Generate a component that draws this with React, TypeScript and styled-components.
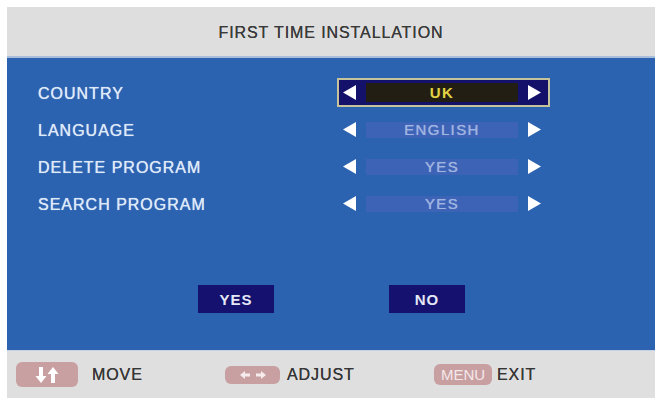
import React from "react";
import styled, { createGlobalStyle } from "styled-components";

const GlobalStyle = createGlobalStyle`
  html, body {
    margin: 0;
    padding: 0;
    background: #ffffff;
  }
  body {
    font-family: "Liberation Sans", Arial, sans-serif;
  }
`;

const Page = styled.div`
  width: 659px;
  height: 404px;
  padding: 7px 4px 6px 7px;
  box-sizing: border-box;
`;

const Panel = styled.div`
  width: 648px;
  height: 391px;
  display: flex;
  flex-direction: column;
`;

const Header = styled.div`
  height: 51px;
  background: #dedede;
  border-bottom: 2px solid #a9bedc;
  box-sizing: border-box;
  display: flex;
  align-items: center;
  justify-content: center;
  color: #3a3a3a;
  font-size: 16px;
  letter-spacing: 0.9px;
  padding-top: 2px;
  text-shadow: 0 0 0.6px #3a3a3a;
`;

const Body = styled.div`
  height: 292px;
  background: #2c63b1;
  box-sizing: border-box;
  padding: 16px 0 0 31px;
  display: flex;
  flex-direction: column;
`;

const Rows = styled.div`
  display: grid;
  grid-template-columns: 299px 213px;
  grid-auto-rows: 37px;
  align-items: center;
`;

const Label = styled.div`
  color: #dfeaf8;
  font-size: 16px;
  letter-spacing: 1px;
  padding-top: 2px;
  text-shadow: 0 0 0.7px #dfeaf8;
`;

const Control = styled.div<{ $active?: boolean }>`
  height: 29px;
  box-sizing: border-box;
  display: flex;
  align-items: center;
  padding: 0 7px 0 4px;
  gap: 10px;
  border: 2px solid ${(p) => (p.$active ? "#c4c39a" : "transparent")};
  background: ${(p) => (p.$active ? "#14116b" : "transparent")};
`;

const Value = styled.div<{ $active?: boolean }>`
  flex: 1;
  height: ${(p) => (p.$active ? "19px" : "16px")};
  display: flex;
  align-items: center;
  justify-content: center;
  font-size: 15px;
  letter-spacing: 1.4px;
  background: ${(p) => (p.$active ? "#231e14" : "#3d63b7")};
  color: ${(p) => (p.$active ? "#e3d443" : "#a0b4e0")};
  font-weight: ${(p) => (p.$active ? "bold" : "normal")};
  text-shadow: ${(p) => (p.$active ? "none" : "0 0 0.7px #a0b4e0")};
`;

const Buttons = styled.div`
  display: flex;
  margin-top: 63px;
  padding-left: 160px;
  gap: 115px;
`;

const Button = styled.div`
  width: 76px;
  height: 28px;
  background: #15126f;
  color: #e4e8f6;
  font-size: 15px;
  font-weight: bold;
  letter-spacing: 1px;
  display: flex;
  align-items: center;
  justify-content: center;
`;

const Footer = styled.div`
  height: 48px;
  background: #dfdfdf;
  border-top: 1px solid #c5d2e6;
  box-sizing: border-box;
  display: flex;
  align-items: center;
  padding: 0 0 0 9px;
`;

const Hint = styled.div<{ $width: number }>`
  width: ${(p) => p.$width}px;
  display: flex;
  align-items: center;
  color: #363636;
  font-size: 16px;
  letter-spacing: 0.9px;
  text-shadow: 0 0 0.6px #363636;
`;

const Key = styled.div<{ $w: number; $h: number; $gap: number }>`
  width: ${(p) => p.$w}px;
  height: ${(p) => p.$h}px;
  margin-right: ${(p) => p.$gap}px;
  border-radius: 6px;
  background: #c9a0a2;
  color: #f4e8ea;
  display: flex;
  align-items: center;
  justify-content: center;
  font-size: 15px;
  letter-spacing: 0;
  text-shadow: none;
`;

const Arrow = ({ dir }: { dir: "left" | "right" }) => (
  <svg width="13" height="15" viewBox="0 0 13 15">
    {dir === "left" ? (
      <polygon points="13,0 13,15 0,7.5" fill="#ffffff" />
    ) : (
      <polygon points="0,0 0,15 13,7.5" fill="#ffffff" />
    )}
  </svg>
);

const UpDownIcon = () => (
  <svg width="24" height="16" viewBox="0 0 24 16">
    <path d="M4 0 h4 v9 h3.5 l-5.5 7 l-5.5 -7 h3.5 z" fill="#ffffff" />
    <path d="M16 16 h4 v-9 h3.5 l-5.5 -7 l-5.5 7 h3.5 z" fill="#ffffff" />
  </svg>
);

const LeftRightIcon = () => (
  <svg width="26" height="10" viewBox="0 0 26 10">
    <path d="M0 5 l5 -4 v2.5 h5 v3 h-5 v2.5 z" fill="#f6ecee" />
    <path d="M26 5 l-5 -4 v2.5 h-5 v3 h5 v2.5 z" fill="#f6ecee" />
  </svg>
);

const settings = [
  { label: "COUNTRY", value: "UK", active: true },
  { label: "LANGUAGE", value: "ENGLISH" },
  { label: "DELETE PROGRAM", value: "YES" },
  { label: "SEARCH PROGRAM", value: "YES" },
];

export default function App() {
  return (
    <>
      <GlobalStyle />
      <Page>
        <Panel>
          <Header>FIRST TIME INSTALLATION</Header>
          <Body>
            <Rows>
              {settings.map((s) => (
                <React.Fragment key={s.label}>
                  <Label>{s.label}</Label>
                  <Control $active={s.active}>
                    <Arrow dir="left" />
                    <Value $active={s.active}>{s.value}</Value>
                    <Arrow dir="right" />
                  </Control>
                </React.Fragment>
              ))}
            </Rows>
            <Buttons>
              <Button>YES</Button>
              <Button>NO</Button>
            </Buttons>
          </Body>
          <Footer>
            <Hint $width={209}>
              <Key $w={62} $h={25} $gap={14}>
                <UpDownIcon />
              </Key>
              MOVE
            </Hint>
            <Hint $width={209}>
              <Key $w={55} $h={18} $gap={7}>
                <LeftRightIcon />
              </Key>
              ADJUST
            </Hint>
            <Hint $width={200}>
              <Key $w={58} $h={21} $gap={5}>
                MENU
              </Key>
              EXIT
            </Hint>
          </Footer>
        </Panel>
      </Page>
    </>
  );
}
